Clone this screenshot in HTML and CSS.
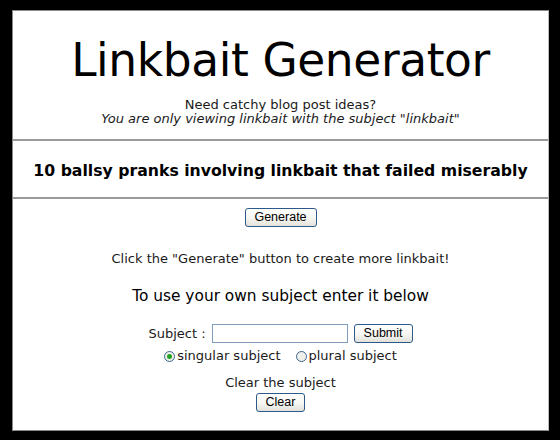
FILE: index.html
```html
<!DOCTYPE html>
<html>
<head>
<meta charset="utf-8">
<title>Linkbait Generator</title>
<link rel="stylesheet" href="styles.css">
</head>
<body>
<div class="page">
  <h1 class="title">Linkbait Generator</h1>
  <div class="intro">
    <div>Need catchy blog post ideas?</div>
    <div class="subject-note">You are only viewing linkbait with the subject "linkbait"</div>
  </div>
  <div class="headline">10 ballsy pranks involving linkbait that failed miserably</div>
  <div class="gen-row"><button class="xp-btn gen-btn">Generate</button></div>
  <div class="hint">Click the "Generate" button to create more linkbait!</div>
  <div class="own">To use your own subject enter it below</div>
  <div class="subject-row">
    <span class="label">Subject :</span>
    <span class="xp-input"></span>
    <button class="xp-btn submit-btn">Submit</button>
  </div>
  <div class="radio-row">
    <span class="radio checked"></span><span class="radio-label">singular subject</span>
    <span class="radio"></span><span class="radio-label">plural subject</span>
  </div>
  <div class="clear-text">Clear the subject</div>
  <div class="clear-row"><button class="xp-btn clear-btn">Clear</button></div>
</div>
</body>
</html>
```
FILE: styles.css
```css
html, body {
  margin: 0;
  padding: 0;
  background: #000;
}
body {
  width: 560px;
  height: 440px;
  overflow: hidden;
  font-family: "DejaVu Sans", Verdana, sans-serif;
  color: #1a1a1a;
}
.page {
  box-sizing: border-box;
  margin: 10px 0 0 12px;
  width: 537px;
  height: 421px;
  background: #fff;
  border: 1px solid #8a8a8a;
  border-right-color: #bbb;
  display: flex;
  flex-direction: column;
  align-items: stretch;
  text-align: center;
}
.title {
  margin: 22px 0 0;
  font-size: 45.5px;
  line-height: 56px;
  font-weight: normal;
  color: #000;
  letter-spacing: -0.4px;
}
.intro {
  margin-top: 9px;
  font-size: 13px;
  line-height: 14px;
  padding-bottom: 13px;
  border-bottom: 2px solid #9a9a9a;
}
.subject-note {
  font-style: italic;
}
.headline {
  padding: 19px 0 15px;
  font-size: 15.7px;
  line-height: 22px;
  font-weight: bold;
  color: #000;
  border-bottom: 2px solid #9a9a9a;
}
.gen-row {
  margin-top: 9px;
  display: flex;
  justify-content: center;
}
.xp-btn {
  box-sizing: border-box;
  height: 19px;
  padding: 0 6px;
  border: 1px solid #2c5a8a;
  border-radius: 3px;
  background: linear-gradient(#ffffff, #f6f6f2 55%, #e2e2da);
  font-family: "Liberation Sans", Arial, sans-serif;
  font-size: 12.5px;
  line-height: 15px;
  color: #000;
}
.gen-btn { width: 72px; }
.submit-btn { width: 59px; }
.clear-btn { width: 49px; }
.hint {
  margin-top: 25px;
  font-size: 13px;
  line-height: 14px;
}
.own {
  margin-top: 21px;
  font-size: 15.4px;
  line-height: 18px;
  color: #000;
}
.subject-row {
  margin-top: 19px;
  display: flex;
  justify-content: center;
  align-items: center;
  font-size: 13px;
  line-height: 19px;
}
.label { margin-right: 6px; }
.xp-input {
  box-sizing: border-box;
  width: 136px;
  height: 19px;
  border: 1px solid #7f9db9;
  background: #fff;
  margin-right: 6px;
}
.radio-row {
  margin-top: 6px;
  display: flex;
  justify-content: center;
  align-items: center;
  font-size: 13px;
  line-height: 14px;
}
.radio {
  box-sizing: border-box;
  width: 11px;
  height: 11px;
  border: 1px solid #3a6690;
  border-radius: 50%;
  background: #f0f0ea;
  margin-right: 2px;
  display: flex;
  align-items: center;
  justify-content: center;
}
.radio.checked::after {
  content: "";
  width: 5px;
  height: 5px;
  border-radius: 50%;
  background: #21a121;
}
.radio-label + .radio { margin-left: 15px; }
.clear-text {
  margin-top: 13px;
  font-size: 13px;
  line-height: 14px;
}
.clear-row {
  margin-top: 3px;
  display: flex;
  justify-content: center;
}
```
